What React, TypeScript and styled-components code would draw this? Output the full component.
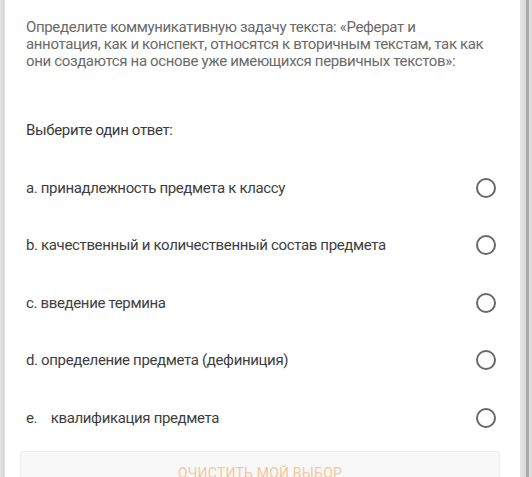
import styled, { createGlobalStyle } from 'styled-components'

const Global = createGlobalStyle`
  html, body {
    margin: 0;
    padding: 0;
    background: #ffffff;
  }
  body {
    font-family: Roboto, "Noto Sans", "Liberation Sans", sans-serif;
    letter-spacing: -0.35px;
  }
`

const Frame = styled.div`
  width: 532px;
  height: 477px;
  overflow: hidden;
  display: flex;
  background: #dcdcdc;
`

const LeftEdge = styled.div`
  width: 5px;
  background: linear-gradient(90deg, #e6e6e6 0, #d6d6d6 3px, #e2e2e2 5px);
`

const Card = styled.div`
  flex: 1;
  background: #ffffff;
  padding: 19px 0 0 21px;
  display: flex;
  flex-direction: column;
`

const RightEdge = styled.div`
  width: 12px;
  background: linear-gradient(90deg, #e4e4e4 0, #dadada 6px, #a9a9a9 6px, #a9a9a9 9px, #dedede 9px);
`

const Question = styled.p`
  margin: 0;
  width: 462px;
  font-size: 15px;
  line-height: 17px;
  color: #6a6a6a;
`

const Prompt = styled.div`
  margin-top: 51px;
  font-size: 15px;
  line-height: 18px;
  color: #3a3a3a;
`

const Options = styled.div`
  margin-top: 20px;
  display: flex;
  flex-direction: column;
`

const Option = styled.label`
  height: 57.5px;
  display: flex;
  align-items: center;
  justify-content: space-between;
  padding-right: 24px;
  font-size: 15px;
  color: #3e3e3e;
  white-space: pre;
`

const Radio = styled.span`
  width: 16px;
  height: 16px;
  border: 2.5px solid #686868;
  border-radius: 50%;
  flex: none;
`

const ClearButton = styled.div`
  margin: 4px 20px 0 -6px;
  height: 40px;
  background: #f8f8f8;
  border: 1px solid #efefef;
  border-radius: 2px;
  display: flex;
  justify-content: center;
  padding-top: 13px;
  box-sizing: border-box;
  font-size: 14px;
  color: #f3c79b;
  letter-spacing: 0.2px;
`

const answers = [
  'a. принадлежность предмета к классу',
  'b. качественный и количественный состав предмета',
  'c. введение термина',
  'd. определение предмета (дефиниция)',
  'e.    квалификация предмета',
]

export default function App() {
  return (
    <Frame>
      <Global />
      <LeftEdge />
      <Card>
        <Question>
          Определите коммуникативную задачу текста: «Реферат и аннотация, как и конспект, относятся к
          вторичным текстам, так как они создаются на основе уже имеющихся первичных текстов»:
        </Question>
        <Prompt>Выберите один ответ:</Prompt>
        <Options>
          {answers.map(a => (
            <Option key={a}>
              <span>{a}</span>
              <Radio />
            </Option>
          ))}
        </Options>
        <ClearButton>ОЧИСТИТЬ МОЙ ВЫБОР</ClearButton>
      </Card>
      <RightEdge />
    </Frame>
  )
}
